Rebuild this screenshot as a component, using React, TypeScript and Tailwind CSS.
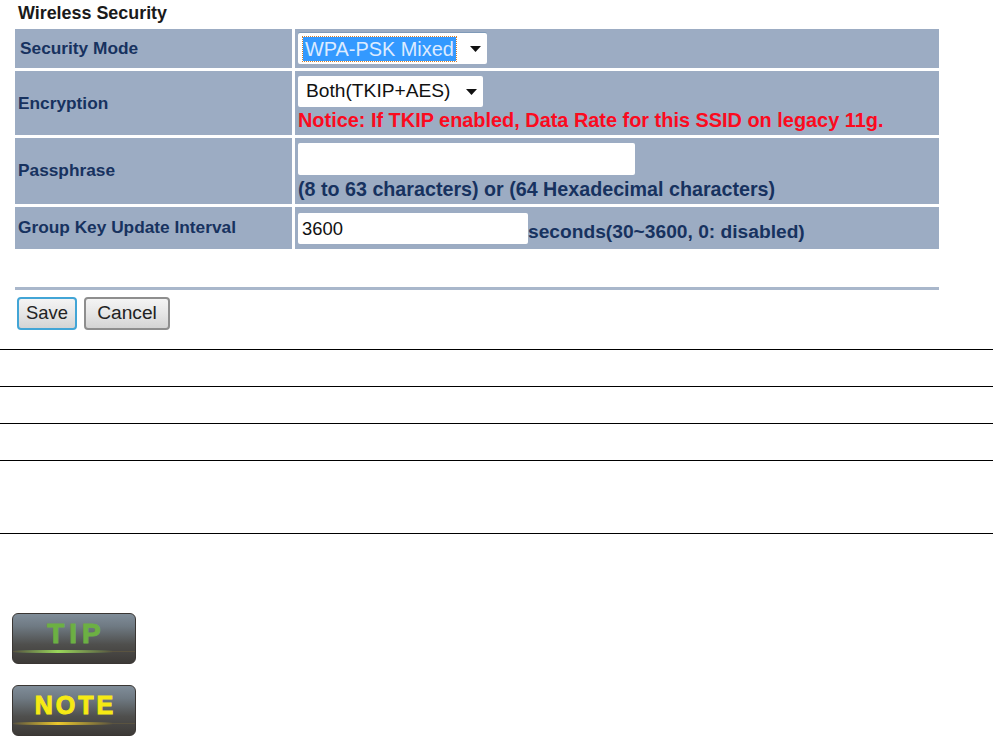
function Caret({ className }: { className: string }) {
  return (
    <svg className={className} width="11" height="6" viewBox="0 0 11 6">
      <path d="M0 0h11L5.5 6z" fill="#111" />
    </svg>
  );
}

function Badge({ label, textColor, glow, size }: { label: string; textColor: string; glow: string; size: string }) {
  return (
    <div className="relative h-[51px] w-[124px] overflow-hidden rounded-[6px] border border-[#3a3633] bg-[linear-gradient(180deg,#808d99_0%,#6f7a83_25%,#4f4f4d_62%,#3d3a37_100%)]">
      <div className={`flex h-[37px] items-center justify-center pt-[2px] font-bold leading-none [-webkit-text-stroke:1px_currentColor] ${textColor} ${size}`}>
        {label}
      </div>
      <div className="h-px w-full bg-[#5a5340]" />
      <div className={`absolute left-0 top-[36px] h-[3px] w-[100px] ${glow} blur-[0.5px]`} />
    </div>
  );
}

const rowLabel = "flex items-center bg-[#9cacc3] pl-[3px] text-[17.3px] font-bold text-[#17325f]";
const rowValue = "bg-[#9cacc3] pl-[3px] font-bold text-[#17325f]";
const fieldBox = "rounded-[2px] bg-white text-[#111] font-normal";

export default function App() {
  return (
    <div className="h-[736px] w-[993px] overflow-hidden bg-white font-['Liberation_Sans',Arial,sans-serif]">
      <div className="pl-[15px]">
        <h1 className="pl-[3px] pt-[4px] text-[17.9px] font-bold leading-[18px] text-[#1a1a1a]">Wireless Security</h1>

        <div className="mt-[7px] grid w-[924px] grid-cols-[277px_644px] grid-rows-[39px_64px_66px_42px] gap-[3px]">
          <div className={`${rowLabel} pl-[5px] pt-[1px]`}>Security Mode</div>
          <div className={`${rowValue} pt-[4px]`}>
            <div className={`${fieldBox} flex h-[31px] w-[189px] items-center pl-[5px] text-[19.9px] shadow-[0_-1px_0_#7f9ab8]`}>
              <span className="bg-[#3399ff] px-[2px] leading-[24px] text-[#dcebff] outline-1 outline-dotted outline-[#d08030]">
                WPA-PSK Mixed
              </span>
              <Caret className="ml-[14px]" />
            </div>
          </div>

          <div className={`${rowLabel} pt-[2px]`}>Encryption</div>
          <div className={`${rowValue} pt-[5px]`}>
            <div className={`${fieldBox} flex h-[31px] w-[185px] items-center pl-[8px] text-[19.2px]`}>
              Both(TKIP+AES)
              <Caret className="ml-[15px]" />
            </div>
            <p className="mt-[3px] whitespace-nowrap text-[19.9px] leading-[20px] text-[#fb0a1e]">
              Notice: If TKIP enabled, Data Rate for this SSID on legacy 11g.
            </p>
          </div>

          <div className={rowLabel}>Passphrase</div>
          <div className={`${rowValue} pt-[5px]`}>
            <div className={`${fieldBox} h-[32px] w-[337px]`} />
            <p className="mt-[4px] whitespace-nowrap text-[19.7px] leading-[20px]">
              (8 to 63 characters) or (64 Hexadecimal characters)
            </p>
          </div>

          <div className={rowLabel}>Group Key Update Interval</div>
          <div className={`${rowValue} flex items-start pt-[6px]`}>
            <div className={`${fieldBox} flex h-[31px] w-[230px] items-center pl-[4px] text-[18.4px]`}>3600</div>
            <span className="whitespace-nowrap pt-[9px] text-[19.2px] leading-[20px]">seconds(30~3600, 0: disabled)</span>
          </div>
        </div>

        <div className="mt-[38px] h-[3px] w-[924px] bg-[#a9b7cb]" />

        <div className="mt-[7px] flex gap-[7px] pl-[2px]">
          <button className="h-[33px] w-[60px] rounded-[4px] border-2 border-[#42a5d6] bg-[linear-gradient(180deg,#f4f4f4_0%,#e6e6e6_50%,#d4d4d4_100%)] pb-[2px] text-[18.4px] text-[#222]">
            Save
          </button>
          <button className="h-[33px] w-[86px] rounded-[4px] border-2 border-[#8e8e8e] bg-[linear-gradient(180deg,#f4f4f4_0%,#e6e6e6_50%,#d4d4d4_100%)] text-[19.2px] text-[#222]">
            Cancel
          </button>
        </div>
      </div>

      <div className="mt-[19px] border-b border-black">
        <div className="h-[37px] border-t border-black" />
        <div className="h-[37px] border-t border-black" />
        <div className="h-[37px] border-t border-black" />
        <div className="h-[73px] border-t border-black" />
      </div>

      <div className="mt-[79px] flex flex-col gap-[21px] pl-[12px]">
        <Badge
          label="TIP"
          textColor="text-[#6cb043]"
          glow="bg-[linear-gradient(90deg,transparent_0%,#9ad85a_45%,transparent_100%)]"
          size="pl-[5px] text-[28px] tracking-[5px]"
        />
        <Badge
          label="NOTE"
          textColor="text-[#f6ea14]"
          glow="bg-[linear-gradient(90deg,transparent_0%,#ecc82c_45%,transparent_100%)]"
          size="pl-[3px] text-[25px] tracking-[3px]"
        />
      </div>
    </div>
  );
}
